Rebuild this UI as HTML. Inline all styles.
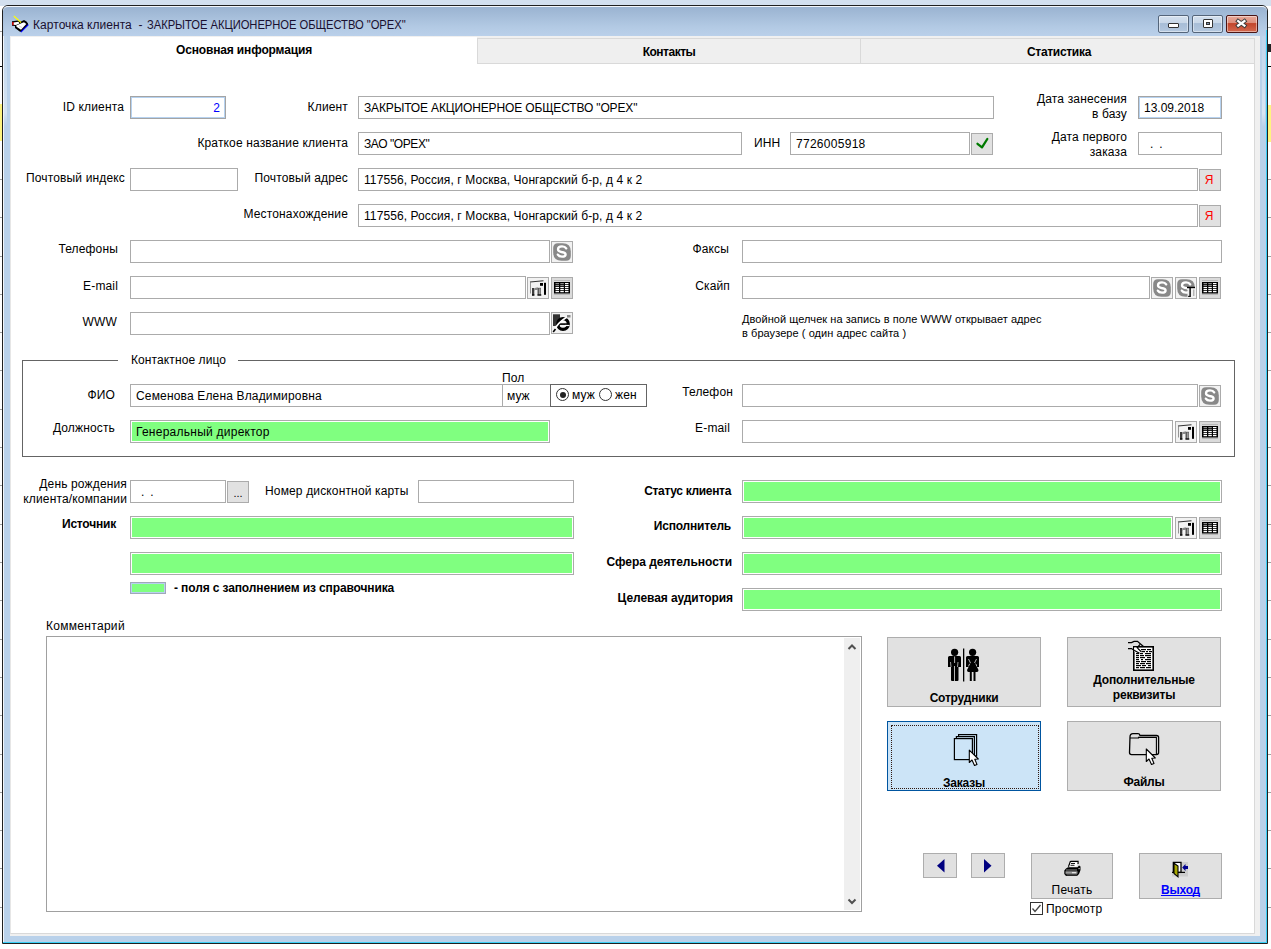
<!DOCTYPE html>
<html><head><meta charset="utf-8">
<style>
*{box-sizing:border-box}
html,body{margin:0;padding:0}
body{width:1271px;height:949px;position:relative;overflow:hidden;background:#fff;font-family:"Liberation Sans",sans-serif;font-size:12px;color:#000}
.a{position:absolute}
svg{position:absolute;overflow:visible}
.bgtop{left:0;top:0;width:1271px;height:6px;background:#d3e0ef}
.win{left:2px;top:5px;width:1266px;height:939px;border:1px solid #202020;border-radius:6px 6px 0 0;background:#b9d1ea}
.tbar{left:3px;top:6px;width:1264px;height:30px;border-radius:5px 5px 0 0;background:linear-gradient(#9ab3d1,#b3cae4 70%,#bad0ea);border-top:1px solid #f4f7fb}
.client{left:10px;top:36px;width:1250px;height:900px;background:#f0f0f0}
.page{left:10px;top:63px;width:1245px;height:871px;background:#fff;border-left:1px solid #e6e6e6;border-right:1px solid #d9d9d9;border-bottom:1px solid #d9d9d9}
.title{left:33px;top:18px;font-size:12px;color:#1a1030;white-space:nowrap;letter-spacing:0.05px}
.tbtn{top:15px;height:18px;border:1px solid #54657a;border-radius:2px;box-shadow:inset 0 0 0 1px rgba(255,255,255,0.45);background:linear-gradient(#d3e0ee 0,#c8d7e8 45%,#a7bdd7 47%,#b4c8df 100%)}
.tab{top:38px;height:26px;background:#efefef;border:1px solid #d9d9d9;font-weight:bold;text-align:center;line-height:25px}
.l{position:absolute;white-space:nowrap;text-align:right;line-height:14px}
.t{position:absolute;white-space:nowrap;line-height:14px}
.b{font-weight:bold}
.in{position:absolute;height:23px;border:1px solid #ababab;background:#fff;padding-left:5px;padding-top:1px;line-height:21px;white-space:nowrap;overflow:hidden}
.foc{border-color:#a4a4a4;box-shadow:inset 0 0 0 1px #b6d2f0}
.g{background:#80ff80}
.in.g{box-shadow:inset 0 0 0 1px #fff}
.sb{position:absolute;width:22px;height:22px;background:#e1e1e1;border:1px solid #ababab}
.btn{position:absolute;background:#e1e1e1;border:1px solid #adadad}
.bt{position:absolute;white-space:nowrap;line-height:14px;text-align:center;font-weight:bold;letter-spacing:-0.2px}
</style></head><body>
<svg width="0" height="0" style="position:absolute;left:0;top:0">
<defs>
 <g id="sk">
  <path d="M7 2.2 L11.5 2.2 Q19.8 2.2 19.8 10.5 L19.8 15 Q19.8 19.8 15 19.8 L10.5 19.8 Q2.2 19.8 2.2 11.5 L2.2 7 Q2.2 2.2 7 2.2 Z" fill="#888"/>
  <path d="M15.2 7.4 Q14 5.4 11 5.4 Q7 5.4 7 8.3 Q7 10.4 10.5 11 Q14.6 11.6 14.6 13.4 Q14.6 15.6 11 15.6 Q8 15.6 6.8 13.6" fill="none" stroke="#fff" stroke-width="2.3" stroke-linecap="round"/>
 </g>
 <g id="tb">
  <rect x="3" y="3" width="16" height="1" fill="#b8b8b8"/>
  <rect x="3" y="17" width="16" height="1" fill="#b8b8b8"/>
  <rect x="3" y="5" width="16" height="11.5" fill="#000"/>
  <g fill="#fff">
   <rect x="4.5" y="10" width="3.5" height="1.2"/><rect x="9.3" y="10" width="3.5" height="1.2"/><rect x="14" y="10" width="3.5" height="1.2"/>
   <rect x="4.5" y="12" width="3.5" height="1.2"/><rect x="9.3" y="12" width="3.5" height="1.2"/><rect x="14" y="12" width="3.5" height="1.2"/>
   <rect x="4.5" y="14" width="3.5" height="1.2"/><rect x="9.3" y="14" width="3.5" height="1.2"/><rect x="14" y="14" width="3.5" height="1.2"/>
   <rect x="14" y="6" width="3.5" height="1.2"/><rect x="14" y="8" width="3.5" height="1.2"/>
  </g>
  <g fill="#8a8a8a">
   <rect x="4.5" y="6" width="3.5" height="1.2"/><rect x="9.3" y="6" width="3.5" height="1.2"/>
   <rect x="4.5" y="8" width="3.5" height="1.2"/><rect x="9.3" y="8" width="3.5" height="1.2"/>
  </g>
 </g>
 <g id="ml">
  <path d="M3.5 5.5 L3.5 16.5" stroke="#8a8a8a" stroke-width="0.9"/>
  <path d="M3 5 L16.5 3.8" stroke="#333" stroke-width="1.1"/>
  <rect x="13" y="6" width="3" height="2.8" fill="#000"/>
  <rect x="17" y="5.8" width="2" height="12" fill="#000"/>
  <rect x="5" y="11" width="2.3" height="7.5" fill="#3a3a3a"/>
  <path d="M7.3 11.5 Q9 10 11 10.5 L10.5 13 L8 13 L7.3 14 Z" fill="#888"/>
  <rect x="10.5" y="10.8" width="3.5" height="7.6" fill="#5a5a5a"/>
  <rect x="12" y="11.5" width="1.5" height="6" fill="#9a9a9a"/>
  <rect x="10.5" y="17.4" width="3.8" height="1.2" fill="#000"/>
  <rect x="5" y="17.4" width="2.4" height="1.2" fill="#000"/>
 </g>
 <g id="ie">
  <rect x="2" y="2.5" width="7" height="11.5" fill="#555"/>
  <path d="M2 2.5 L9 2.5 L9 6 L4 14 L2 14 Z" fill="#333"/>
  <circle cx="12" cy="12" r="5.3" fill="none" stroke="#000" stroke-width="3.2"/>
  <rect x="7.5" y="11.3" width="9.5" height="1.6" fill="#000"/>
  <rect x="9" y="9" width="5" height="1.5" fill="#fff"/>
  <path d="M14 13.5 L18.5 13.5" stroke="#fff" stroke-width="1.2"/>
  <path d="M2.5 19.5 Q6 11 16 5" fill="none" stroke="#fff" stroke-width="1.6"/>
  <path d="M2.2 20 L4.5 17" stroke="#000" stroke-width="1.6"/>
  <rect x="16" y="3" width="3.5" height="2.5" fill="#888"/>
 </g>
</defs></svg>
<div class="a bgtop"></div>
<div class="a win"></div>
<div class="a tbar"></div>
<div class="a" style="left:1268px;top:179px;width:3px;height:1px;background:#a0a0a0"></div>
<div class="a" style="left:0;top:179px;width:2px;height:1px;background:#a0a0a0"></div>
<div class="a" style="left:1268px;top:217px;width:3px;height:1px;background:#a0a0a0"></div>
<div class="a" style="left:0;top:217px;width:2px;height:1px;background:#a0a0a0"></div>
<div class="a" style="left:1268px;top:256px;width:3px;height:1px;background:#a0a0a0"></div>
<div class="a" style="left:0;top:256px;width:2px;height:1px;background:#a0a0a0"></div>
<div class="a" style="left:1268px;top:294px;width:3px;height:1px;background:#a0a0a0"></div>
<div class="a" style="left:0;top:294px;width:2px;height:1px;background:#a0a0a0"></div>
<div class="a" style="left:1268px;top:332px;width:3px;height:1px;background:#a0a0a0"></div>
<div class="a" style="left:0;top:332px;width:2px;height:1px;background:#a0a0a0"></div>
<div class="a" style="left:1268px;top:370px;width:3px;height:1px;background:#a0a0a0"></div>
<div class="a" style="left:0;top:370px;width:2px;height:1px;background:#a0a0a0"></div>
<div class="a" style="left:1268px;top:409px;width:3px;height:1px;background:#a0a0a0"></div>
<div class="a" style="left:0;top:409px;width:2px;height:1px;background:#a0a0a0"></div>
<div class="a" style="left:1268px;top:447px;width:3px;height:1px;background:#a0a0a0"></div>
<div class="a" style="left:0;top:447px;width:2px;height:1px;background:#a0a0a0"></div>
<div class="a" style="left:1268px;top:485px;width:3px;height:1px;background:#a0a0a0"></div>
<div class="a" style="left:0;top:485px;width:2px;height:1px;background:#a0a0a0"></div>
<div class="a" style="left:1268px;top:524px;width:3px;height:1px;background:#a0a0a0"></div>
<div class="a" style="left:0;top:524px;width:2px;height:1px;background:#a0a0a0"></div>
<div class="a" style="left:1268px;top:562px;width:3px;height:1px;background:#a0a0a0"></div>
<div class="a" style="left:0;top:562px;width:2px;height:1px;background:#a0a0a0"></div>
<div class="a" style="left:1268px;top:600px;width:3px;height:1px;background:#a0a0a0"></div>
<div class="a" style="left:0;top:600px;width:2px;height:1px;background:#a0a0a0"></div>
<div class="a" style="left:1268px;top:639px;width:3px;height:1px;background:#a0a0a0"></div>
<div class="a" style="left:0;top:639px;width:2px;height:1px;background:#a0a0a0"></div>
<div class="a" style="left:1268px;top:677px;width:3px;height:1px;background:#a0a0a0"></div>
<div class="a" style="left:0;top:677px;width:2px;height:1px;background:#a0a0a0"></div>
<div class="a" style="left:1268px;top:715px;width:3px;height:1px;background:#a0a0a0"></div>
<div class="a" style="left:0;top:715px;width:2px;height:1px;background:#a0a0a0"></div>
<div class="a" style="left:1268px;top:754px;width:3px;height:1px;background:#a0a0a0"></div>
<div class="a" style="left:0;top:754px;width:2px;height:1px;background:#a0a0a0"></div>
<div class="a" style="left:1268px;top:792px;width:3px;height:1px;background:#a0a0a0"></div>
<div class="a" style="left:0;top:792px;width:2px;height:1px;background:#a0a0a0"></div>
<div class="a" style="left:1268px;top:830px;width:3px;height:1px;background:#a0a0a0"></div>
<div class="a" style="left:0;top:830px;width:2px;height:1px;background:#a0a0a0"></div>
<div class="a" style="left:1268px;top:868px;width:3px;height:1px;background:#a0a0a0"></div>
<div class="a" style="left:0;top:868px;width:2px;height:1px;background:#a0a0a0"></div>
<div class="a" style="left:1268px;top:907px;width:3px;height:1px;background:#a0a0a0"></div>
<div class="a" style="left:0;top:907px;width:2px;height:1px;background:#a0a0a0"></div>
<div class="a" style="left:1268px;top:27px;width:3px;height:1px;background:#a0a0a0"></div>
<div class="a" style="left:0;top:31px;width:2px;height:1px;background:#a0a0a0"></div>
<div class="a" style="left:1266px;top:30px;width:1px;height:913px;background:#3ad0f8"></div>
<div class="a" style="left:3px;top:942px;width:1264px;height:1px;background:#3ad0f8"></div>
<div class="a" style="left:1268px;top:105px;width:3px;height:37px;background:#fff480"></div>
<div class="a" style="left:0;top:104px;width:2px;height:37px;background:#fff480"></div>
<div class="a" style="left:1268px;top:66px;width:3px;height:1px;background:#000"></div>
<div class="a" style="left:0;top:66px;width:2px;height:1px;background:#000"></div>

<svg style="left:11px;top:15px" width="19" height="19" viewBox="11 15 19 19">
 <path d="M12 21.3 L18 20.5 L21 21.5 L24 20 L26.5 21.5 L28 23.5 L28 25 L21.5 31.8 L20 31.8 L15 28 L15 26 L12 25.8 Z" fill="#000"/>
 <path d="M16.2 25.5 L22 23 L24 22.2 L26.3 24 L21 29.8 L16.5 26.8 Z" fill="#fff"/>
 <path d="M13.4 22.4 L18.5 21.8 L19.5 23.6 L16 25 L13.4 24.8 Z" fill="#fff"/>
 <rect x="12.2" y="22" width="1.4" height="3.2" fill="#e00000"/>
 <path d="M20.8 32.2 L28.4 24.6" stroke="#0000ff" stroke-width="1.2"/>
 <path d="M13.8 16 L21 22.5" stroke="#ffff00" stroke-width="1.1"/>
 <path d="M19 26 L22 27.5" stroke="#c8c8c8" stroke-width="0.8"/>
</svg>
<div class="a title">Карточка клиента&nbsp; - &nbsp;<span style="display:inline-block;transform:scaleX(0.935);transform-origin:0 50%;letter-spacing:-0.05px;margin-left:-2px">ЗАКРЫТОЕ АКЦИОНЕРНОЕ ОБЩЕСТВО "ОРЕХ"</span></div>
<div class="a tbtn" style="left:1158px;width:31px"><div class="a" style="left:9px;top:7px;width:11px;height:5px;background:#fff;border:1px solid #333;border-radius:1px"></div></div>
<div class="a tbtn" style="left:1192px;width:31px"><div class="a" style="left:10px;top:3px;width:10px;height:9px;background:#fff;border:1px solid #333;border-radius:1px"><div class="a" style="left:2px;top:2px;width:4px;height:3px;background:#7e94b0;border:1px solid #333"></div></div></div>
<div class="a tbtn" style="left:1226px;width:32px;border-color:#4a1515;background:linear-gradient(#e9a898,#dc8d7b 45%,#c2452b 47%,#d4694f 100%)">
 <svg style="left:9px;top:3px" width="11" height="9" viewBox="0 0 11 9"><path d="M2.2 2.1 L8.4 6.6 M8.4 2.1 L2.2 6.6" stroke="#3a3a3a" stroke-width="4.2" stroke-linecap="square"/><path d="M2.2 2.1 L8.4 6.6 M8.4 2.1 L2.2 6.6" stroke="#fff" stroke-width="2.3" stroke-linecap="square"/></svg>
</div>
<div class="a" style="left:4px;top:36px;width:3px;height:90px;background:linear-gradient(rgba(255,255,255,0.08),rgba(255,255,255,0.4) 85%,rgba(255,255,255,0))"></div>
<div class="a" style="left:1262px;top:36px;width:3px;height:91px;background:linear-gradient(rgba(255,255,255,0.08),rgba(255,255,255,0.45) 85%,rgba(255,255,255,0))"></div>
<div class="a" style="left:1268px;top:44px;width:3px;height:8px;background:#222"></div>
<div class="a" style="left:3px;top:36px;width:1px;height:906px;background:#f2f6fb"></div>
<div class="a client"></div>
<div class="a page"></div>

<!-- tabs -->
<div class="a" style="left:11px;top:37px;width:466px;height:27px;background:#fff"></div>
<div class="a" style="left:11px;top:38px;width:466px;height:26px;text-align:center;font-weight:bold;line-height:24px;letter-spacing:-0.15px">Основная информация</div>
<div class="a tab" style="left:477px;width:384px;letter-spacing:-0.5px;line-height:27px">Контакты</div>
<div class="a tab" style="left:860px;width:395px;letter-spacing:-0.3px;line-height:27px;padding-left:3px">Статистика</div>


<div class="l" style="left:0;width:124px;top:100px;letter-spacing:0.15px">ID клиента</div>
<div class="in foc" style="left:130px;top:96px;width:96px;height:23px;text-align:right;padding-right:5px;color:#0000ff">2</div>
<div class="l" style="left:0;width:348px;top:100px;letter-spacing:0.15px">Клиент</div>
<div class="in" style="left:358px;top:96px;width:636px;height:23px;letter-spacing:-0.14px">ЗАКРЫТОЕ АКЦИОНЕРНОЕ ОБЩЕСТВО "ОРЕХ"</div>
<div class="l" style="left:0;width:1127px;top:92px;letter-spacing:0.15px;line-height:15px">Дата занесения<br>в базу</div>
<div class="in foc" style="left:1138px;top:96px;width:84px;height:23px">13.09.2018</div>
<div class="l" style="left:0;width:348px;top:136px;letter-spacing:0.15px">Краткое название клиента</div>
<div class="in" style="left:358px;top:132px;width:384px;height:23px;letter-spacing:-0.42px">ЗАО "ОРЕХ"</div>
<div class="t" style="left:754px;top:136px;letter-spacing:0.1px">ИНН</div>
<div class="in" style="left:790px;top:132px;width:180px;height:23px;letter-spacing:0.28px">7726005918</div>
<div class="sb" style="left:971px;top:133px"><svg style="left:0;top:0" width="20" height="20" viewBox="0 0 20 20"><path d="M5.5 9.8 L10 13.4 L15.3 5" fill="none" stroke="#007a00" stroke-width="2.3" stroke-linecap="round" stroke-linejoin="round"/></svg></div>
<div class="l" style="left:0;width:1127px;top:130px;letter-spacing:0.15px;line-height:15px">Дата первого<br>заказа</div>
<div class="in" style="left:1138px;top:132px;width:84px;height:23px;padding-left:11px;letter-spacing:1.3px">. .</div>
<div class="l" style="left:0;width:125px;top:171px;letter-spacing:0.15px">Почтовый индекс</div>
<div class="in" style="left:130px;top:168px;width:108px;height:23px"></div>
<div class="l" style="left:0;width:348px;top:171px;letter-spacing:0.15px">Почтовый адрес</div>
<div class="in" style="left:358px;top:168px;width:840px;height:23px;letter-spacing:0.09px">117556, Россия, г Москва, Чонгарский б-р, д 4 к 2</div>
<div class="sb" style="left:1199px;top:169px"><div class="a" style="left:-1px;top:3px;width:20px;text-align:center;color:#f00;font-size:12px;line-height:14px">Я</div></div>
<div class="l" style="left:0;width:348px;top:207px;letter-spacing:0.15px">Местонахождение</div>
<div class="in" style="left:358px;top:204px;width:840px;height:23px;letter-spacing:0.09px">117556, Россия, г Москва, Чонгарский б-р, д 4 к 2</div>
<div class="sb" style="left:1199px;top:205px"><div class="a" style="left:-1px;top:3px;width:20px;text-align:center;color:#f00;font-size:12px;line-height:14px">Я</div></div>
<div class="l" style="left:0;width:118px;top:242px;letter-spacing:0.15px">Телефоны</div>
<div class="in" style="left:130px;top:240px;width:420px;height:23px"></div>
<div class="sb" style="left:551px;top:241px;background:#f2f2f2"><svg style="left:-1px;top:-1px" width="22" height="22"><use href="#sk"/></svg></div>
<div class="l" style="left:0;width:729px;top:242px;letter-spacing:0.15px">Факсы</div>
<div class="in" style="left:742px;top:240px;width:480px;height:23px"></div>
<div class="l" style="left:0;width:118px;top:279px;letter-spacing:0.15px">E-mail</div>
<div class="in" style="left:130px;top:276px;width:396px;height:23px"></div>
<div class="sb" style="left:527px;top:277px;background:#f2f2f2"><svg style="left:-1px;top:-1px" width="22" height="22"><use href="#ml"/></svg></div>
<div class="sb" style="left:551px;top:277px;background:#dadada"><svg style="left:-1px;top:-1px" width="22" height="22"><use href="#tb"/></svg></div>
<div class="l" style="left:0;width:730px;top:279px;letter-spacing:0.15px">Скайп</div>
<div class="in" style="left:742px;top:276px;width:408px;height:23px"></div>
<div class="sb" style="left:1151px;top:277px;background:#f2f2f2"><svg style="left:-1px;top:-1px" width="22" height="22"><use href="#sk"/></svg></div>
<div class="sb" style="left:1175px;top:277px;background:#f2f2f2"><svg style="left:-1px;top:-1px" width="22" height="22"><use href="#sk"/><rect x="12.5" y="11" width="8" height="9" fill="#f2f2f2"/><path d="M10.5 13 L11.5 12.5" stroke="#888" stroke-width="1.5"/><rect x="12" y="9.8" width="8" height="1.4" fill="#000"/><rect x="14.4" y="10" width="1.4" height="10" fill="#000"/><rect x="13.2" y="18.8" width="1.6" height="1.2" fill="#000"/><rect x="18.3" y="12.5" width="1" height="6.5" fill="#999"/></svg></div>
<div class="sb" style="left:1199px;top:277px;background:#dadada"><svg style="left:-1px;top:-1px" width="22" height="22"><use href="#tb"/></svg></div>
<div class="l" style="left:0;width:117px;top:315px;letter-spacing:0.15px">WWW</div>
<div class="in" style="left:130px;top:312px;width:420px;height:23px"></div>
<div class="sb" style="left:551px;top:312px;background:#f2f2f2"><svg style="left:-1px;top:-1px" width="22" height="22"><use href="#ie"/></svg></div>
<div class="t" style="left:742px;top:313px;letter-spacing:0.06px;font-size:11px;line-height:13.5px">Двойной щелчек на запись в поле WWW открывает адрес<br>в браузере ( один адрес сайта )</div>
<div class="a" style="left:22px;top:360px;width:1213px;height:97px;border:1px solid #646464"></div>
<div class="a" style="left:118px;top:355px;width:120px;height:10px;background:#fff"></div>
<div class="t" style="left:131px;top:353px;letter-spacing:0.1px">Контактное лицо</div>
<div class="l" style="left:0;width:115px;top:388px;letter-spacing:0.15px">ФИО</div>
<div class="in" style="left:130px;top:384px;width:373px;height:23px;letter-spacing:0.16px">Семенова Елена Владимировна</div>
<div class="t" style="left:502px;top:371px;letter-spacing:0.15px">Пол</div>
<div class="in" style="left:502px;top:384px;width:49px;height:23px;padding-left:4px">муж</div>
<div class="a" style="left:550px;top:384px;width:97px;height:23px;border:1px solid #646464"></div>
<div class="a" style="left:556px;top:388px;width:13px;height:13px;border:1px solid #333;border-radius:50%;background:#fff"><div class="a" style="left:2.5px;top:2.5px;width:6px;height:6px;border-radius:50%;background:#222"></div></div>
<div class="t" style="left:572px;top:388px;letter-spacing:0.15px">муж</div>
<div class="a" style="left:599px;top:388px;width:13px;height:13px;border:1px solid #333;border-radius:50%;background:#fff"></div>
<div class="t" style="left:615px;top:388px;letter-spacing:0.15px">жен</div>
<div class="l" style="left:0;width:733px;top:385px;letter-spacing:0.15px">Телефон</div>
<div class="in" style="left:742px;top:384px;width:456px;height:23px"></div>
<div class="sb" style="left:1199px;top:385px;background:#f2f2f2"><svg style="left:-1px;top:-1px" width="22" height="22"><use href="#sk"/></svg></div>
<div class="l" style="left:0;width:115px;top:421px;letter-spacing:0.15px">Должность</div>
<div class="in g" style="left:130px;top:420px;width:420px;height:23px;letter-spacing:0.25px">Генеральный директор</div>
<div class="l" style="left:0;width:730px;top:421px;letter-spacing:0.15px">E-mail</div>
<div class="in" style="left:742px;top:420px;width:431px;height:23px"></div>
<div class="sb" style="left:1175px;top:421px;background:#f2f2f2"><svg style="left:-1px;top:-1px" width="22" height="22"><use href="#ml"/></svg></div>
<div class="sb" style="left:1199px;top:421px;background:#dadada"><svg style="left:-1px;top:-1px" width="22" height="22"><use href="#tb"/></svg></div>
<div class="l" style="left:0;width:127px;top:477px;letter-spacing:0.15px;line-height:15px">День рождения<br>клиента/компании</div>
<div class="in" style="left:130px;top:480px;width:96px;height:23px;padding-left:10px;letter-spacing:1.3px">. .</div>
<div class="sb" style="left:227px;top:481px"><div class="a" style="left:0;top:4px;width:20px;text-align:center;font-size:11px;line-height:14px">...</div></div>
<div class="t" style="left:265px;top:484px;letter-spacing:0.15px">Номер дисконтной карты</div>
<div class="in" style="left:418px;top:480px;width:156px;height:23px"></div>
<div class="l b" style="left:0;width:731px;top:484px;letter-spacing:-0.33px">Статус клиента</div>
<div class="in g" style="left:742px;top:480px;width:480px;height:23px"></div>
<div class="l b" style="left:0;width:116px;top:517px;letter-spacing:-0.2px">Источник</div>
<div class="in g" style="left:130px;top:516px;width:444px;height:23px"></div>
<div class="l b" style="left:0;width:731px;top:519px;letter-spacing:-0.2px">Исполнитель</div>
<div class="in g" style="left:742px;top:516px;width:431px;height:23px"></div>
<div class="sb" style="left:1175px;top:517px;background:#f2f2f2"><svg style="left:-1px;top:-1px" width="22" height="22"><use href="#ml"/></svg></div>
<div class="sb" style="left:1199px;top:517px;background:#dadada"><svg style="left:-1px;top:-1px" width="22" height="22"><use href="#tb"/></svg></div>
<div class="in g" style="left:130px;top:552px;width:444px;height:23px"></div>
<div class="l b" style="left:0;width:732px;top:555px;letter-spacing:-0.03px">Сфера деятельности</div>
<div class="in g" style="left:742px;top:552px;width:480px;height:23px"></div>
<div class="a g" style="left:130px;top:582px;width:36px;height:12px;border:1px solid #a0a8b8;box-shadow:inset 0 0 0 1px #b8d0f0"></div>
<div class="t b" style="left:174px;top:581px;letter-spacing:-0.12px">- поля с заполнением из справочника</div>
<div class="l b" style="left:0;width:733px;top:591px;letter-spacing:-0.08px">Целевая аудитория</div>
<div class="in g" style="left:742px;top:588px;width:480px;height:23px"></div>

<!-- comment -->
<div class="t" style="left:46px;top:619px;letter-spacing:0.3px">Комментарий</div>
<div class="a" style="left:46px;top:636px;width:816px;height:276px;border:1px solid #a0a0a0"></div>
<div class="a" style="left:844px;top:638px;width:16px;height:272px;background:#efefef"></div>
<svg style="left:844px;top:638px" width="16" height="272" viewBox="0 0 16 272">
 <path d="M4.5 11 L8 7.5 L11.5 11" fill="none" stroke="#505050" stroke-width="2"/>
 <path d="M4.5 261.5 L8 265 L11.5 261.5" fill="none" stroke="#505050" stroke-width="2"/>
</svg>

<!-- big buttons -->
<div class="btn" style="left:887px;top:637px;width:154px;height:70px"></div>
<div class="bt" style="left:887px;width:154px;top:691px">Сотрудники</div>
<div class="btn" style="left:1067px;top:637px;width:154px;height:70px"></div>
<div class="bt" style="left:1067px;width:154px;top:673px;line-height:15px">Дополнительные<br>реквизиты</div>
<div class="btn" style="left:887px;top:721px;width:154px;height:70px;background:#cce4f7;border-color:#0055a0"><div class="a" style="left:3px;top:3px;width:148px;height:64px;border:1px dotted #301810"></div></div>
<div class="bt" style="left:887px;width:154px;top:776px">Заказы</div>
<div class="btn" style="left:1067px;top:721px;width:154px;height:70px"></div>
<div class="bt" style="left:1067px;width:154px;top:775px">Файлы</div>


<!-- big icons -->
<svg style="left:946px;top:647px" width="36" height="36" viewBox="946 647 36 36">
 <g fill="#000">
  <circle cx="954.6" cy="652.3" r="3.6"/>
  <path d="M949.5 656 L959.5 656 Q961 656 961 657.5 L961 667 L958.5 667 L958.5 680 Q958.5 681 957.5 681 L955.8 681 L955 681 L955 666 L954.2 666 L954.2 681 L952 681 Q951 681 951 680 L951 667 L948 667 L948 657.5 Q948 656 949.5 656 Z"/>
  <rect x="963" y="648.5" width="1.3" height="33"/>
  <circle cx="972.6" cy="652.3" r="3.6"/>
  <path d="M967.5 656 L977.5 656 Q979 656 979 657.5 L979 667 L977 667 L977 665 L975 663 L978.5 670 Q978.5 672 977 672 L975.5 672 L975.5 681 L973.5 681 L973.5 672 L971.8 672 L971.8 681 L969.8 681 L969.8 672 L968.5 672 Q967 672 967 670 L970.5 663 L968.5 665 L968.5 667 L966 667 L966 657.5 Q966 656 967.5 656 Z"/>
 </g>
 <path d="M954.6 656.5 L954.6 663" stroke="#e1e1e1" stroke-width="0.8"/>
 <path d="M950.5 662 L951 667 M958 662 L957.5 667" stroke="#e1e1e1" stroke-width="0.7"/>
 <path d="M968.5 659 L970.5 663 M976.5 659 L974.5 663" stroke="#e1e1e1" stroke-width="0.8"/>
</svg>
<svg style="left:1126px;top:638px" width="30" height="35" viewBox="1126 638 30 35">
 <rect x="1133" y="646" width="21" height="25" fill="#000"/>
 <rect x="1134.6" y="647.6" width="17.8" height="21.8" fill="#fff"/>
 <g fill="#000"><rect x="1136" y="649" width="3" height="1.2"/><rect x="1141" y="649" width="5" height="1.2"/><rect x="1147" y="649" width="4" height="1.2"/><rect x="1142" y="651" width="3" height="1.2"/><rect x="1146" y="651" width="2" height="1.2"/><rect x="1149" y="651" width="3" height="1.2"/><rect x="1136" y="653" width="3" height="1.2"/><rect x="1140" y="653" width="3" height="1.2"/><rect x="1145" y="653" width="6" height="1.2"/><rect x="1136" y="655" width="3" height="1.2"/><rect x="1140" y="655" width="4" height="1.2"/><rect x="1145" y="655" width="6" height="1.2"/><rect x="1136" y="657" width="3" height="1.2"/><rect x="1140" y="657" width="5" height="1.2"/><rect x="1147" y="657" width="4" height="1.2"/><rect x="1136" y="659" width="3" height="1.2"/><rect x="1141" y="659" width="2" height="1.2"/><rect x="1145" y="659" width="6" height="1.2"/><rect x="1136" y="661" width="4" height="1.2"/><rect x="1141" y="661" width="5" height="1.2"/><rect x="1147" y="661" width="4" height="1.2"/><rect x="1136" y="663" width="3" height="1.2"/><rect x="1140" y="663" width="5" height="1.2"/><rect x="1146" y="663" width="5" height="1.2"/><rect x="1136" y="665" width="5" height="1.2"/><rect x="1142" y="665" width="4" height="1.2"/><rect x="1148" y="665" width="3" height="1.2"/><rect x="1136" y="667" width="3" height="1.2"/><rect x="1140" y="667" width="5" height="1.2"/><rect x="1146" y="667" width="5" height="1.2"/></g>
 <path d="M1134 647.5 L1136 647.5 L1141 651.5 L1134 651.5 Z" fill="#fff"/>
 <path d="M1128 642.6 L1131.5 642.6 L1134 641.4 L1137.5 641.4 L1140.5 644 L1143.5 646.5" fill="none" stroke="#000" stroke-width="1.2"/>
 <path d="M1128 648.6 L1131.5 648.6 L1134.5 650.5 L1139.5 653.3" fill="none" stroke="#000" stroke-width="1.2"/>
 <path d="M1140 644.3 L1137.3 647.8 L1141.5 652" fill="none" stroke="#000" stroke-width="1.2"/>
</svg>
<svg style="left:950px;top:731px" width="32" height="40" viewBox="950 731 32 40">
 <g fill="#cce4f7" stroke="#000" stroke-width="1.2">
  <rect x="958.6" y="734.6" width="18" height="21.5"/>
  <rect x="956.4" y="736.6" width="18" height="21.5"/>
  <rect x="954.4" y="738.6" width="18" height="21"/>
 </g>
 <path d="M969.3 750.2 L969.3 762.5 L972 760 L974.5 765.5 L977 764.5 L974.8 759.2 L978.3 759 Z" fill="#fff" stroke="#000" stroke-width="1.1" stroke-linejoin="round"/>
</svg>
<svg style="left:1126px;top:730px" width="36" height="40" viewBox="1126 730 36 40">
 <path d="M1130 737 Q1130 733.6 1133 733.6 L1138 733.6 Q1139.5 733.6 1140 735.5 L1156.5 735.5 Q1158.6 735.5 1158.6 737.5 L1158.6 752.5 Q1158.6 754.6 1156.5 754.6 L1131.5 754.6 Q1129.5 754.6 1129.5 752.5 Z" fill="#e1e1e1" stroke="#000" stroke-width="1.3"/>
 <path d="M1130 738 L1138.5 738 L1138.5 737.4 L1156.4 737.4 L1156.4 754.3" fill="none" stroke="#000" stroke-width="1.1"/>
 <path d="M1146.3 749 L1146.3 761.5 L1149 759 L1151.5 764.5 L1154 763.5 L1151.8 758.2 L1155.3 758 Z" fill="#fff" stroke="#000" stroke-width="1.1" stroke-linejoin="round"/>
</svg>


<!-- nav -->
<div class="btn" style="left:923px;top:853px;width:34px;height:25px"></div>
<svg style="left:937px;top:859px" width="8" height="14" viewBox="0 0 8 14"><path d="M7.5 0 L0 6.8 L7.5 13.5 Z" fill="#000080"/></svg>
<div class="btn" style="left:971px;top:853px;width:34px;height:25px"></div>
<svg style="left:984px;top:859px" width="8" height="14" viewBox="0 0 8 14"><path d="M0 0 L7.5 6.8 L0 13.5 Z" fill="#000080"/></svg>
<div class="btn" style="left:1031px;top:853px;width:82px;height:46px"></div>
<div class="t" style="left:1031px;width:82px;text-align:center;top:883px;letter-spacing:0.25px">Печать</div>
<div class="btn" style="left:1139px;top:853px;width:83px;height:46px"></div>
<div class="bt" style="left:1139px;width:83px;top:883px;color:#0000ff;text-decoration:underline;text-decoration-skip-ink:none">Выход</div>
<div class="a" style="left:1030px;top:902px;width:13px;height:13px;border:1px solid #333;background:#fff">
 <svg style="left:0;top:0" width="11" height="11" viewBox="0 0 11 11"><path d="M1.5 5.5 L4 8.5 L9.5 2" fill="none" stroke="#444" stroke-width="1.3"/></svg>
</div>
<div class="t" style="left:1046px;top:902px;letter-spacing:0.18px">Просмотр</div>

<svg style="left:1062px;top:859px" width="22" height="19" viewBox="1062 859 22 19">
 <path d="M1070.5 861.3 L1078 861.3 L1078 864 M1070.5 861.3 L1068.5 866.8" fill="none" stroke="#000" stroke-width="1.3"/>
 <path d="M1070.8 862.2 L1077.5 862.2 L1076.5 866.5 L1069.3 866.5 Z" fill="#fff"/>
 <path d="M1071 863.5 h4 M1070.5 865.3 h4" stroke="#000" stroke-width="0.9"/>
 <path d="M1068 867.2 L1077.5 867.2 L1079 865.5 L1080.5 866.5 L1080.5 870 L1080 871.5 L1079 874 L1077 876 L1066 876 L1064.3 874 L1064.3 870.5 L1066 868.5 Z" fill="#000"/>
 <rect x="1066" y="869.5" width="11" height="1" fill="#888"/>
 <rect x="1065.5" y="871.3" width="12" height="2.5" fill="#9a9a9a"/>
 <rect x="1072" y="872.3" width="4" height="0.9" fill="#fff"/>
 <rect x="1066.5" y="874.5" width="10.5" height="0.8" fill="#888"/>
 <rect x="1078.5" y="868" width="1.2" height="1.2" fill="#ccc"/>
</svg>
<svg style="left:1171px;top:861px" width="18" height="17" viewBox="1171 861 18 17">
 <rect x="1172" y="862" width="16" height="14.5" fill="#cdcdcd"/>
 <rect x="1173.4" y="862.4" width="7.6" height="10" fill="#fff" stroke="#000" stroke-width="1.3"/>
 <path d="M1172 872.4 L1185 872.4" stroke="#000" stroke-width="1.2"/>
 <path d="M1174 863.2 L1178 866 L1178 876.8 L1174 873.5 Z" fill="#a8a800" stroke="#000" stroke-width="1.1"/>
 <path d="M1182.2 867.5 L1185.5 864 L1185.5 866 L1188 866 L1188 869 L1185.5 869 L1185.5 871 Z" fill="#000090"/>
</svg>
</body></html>
